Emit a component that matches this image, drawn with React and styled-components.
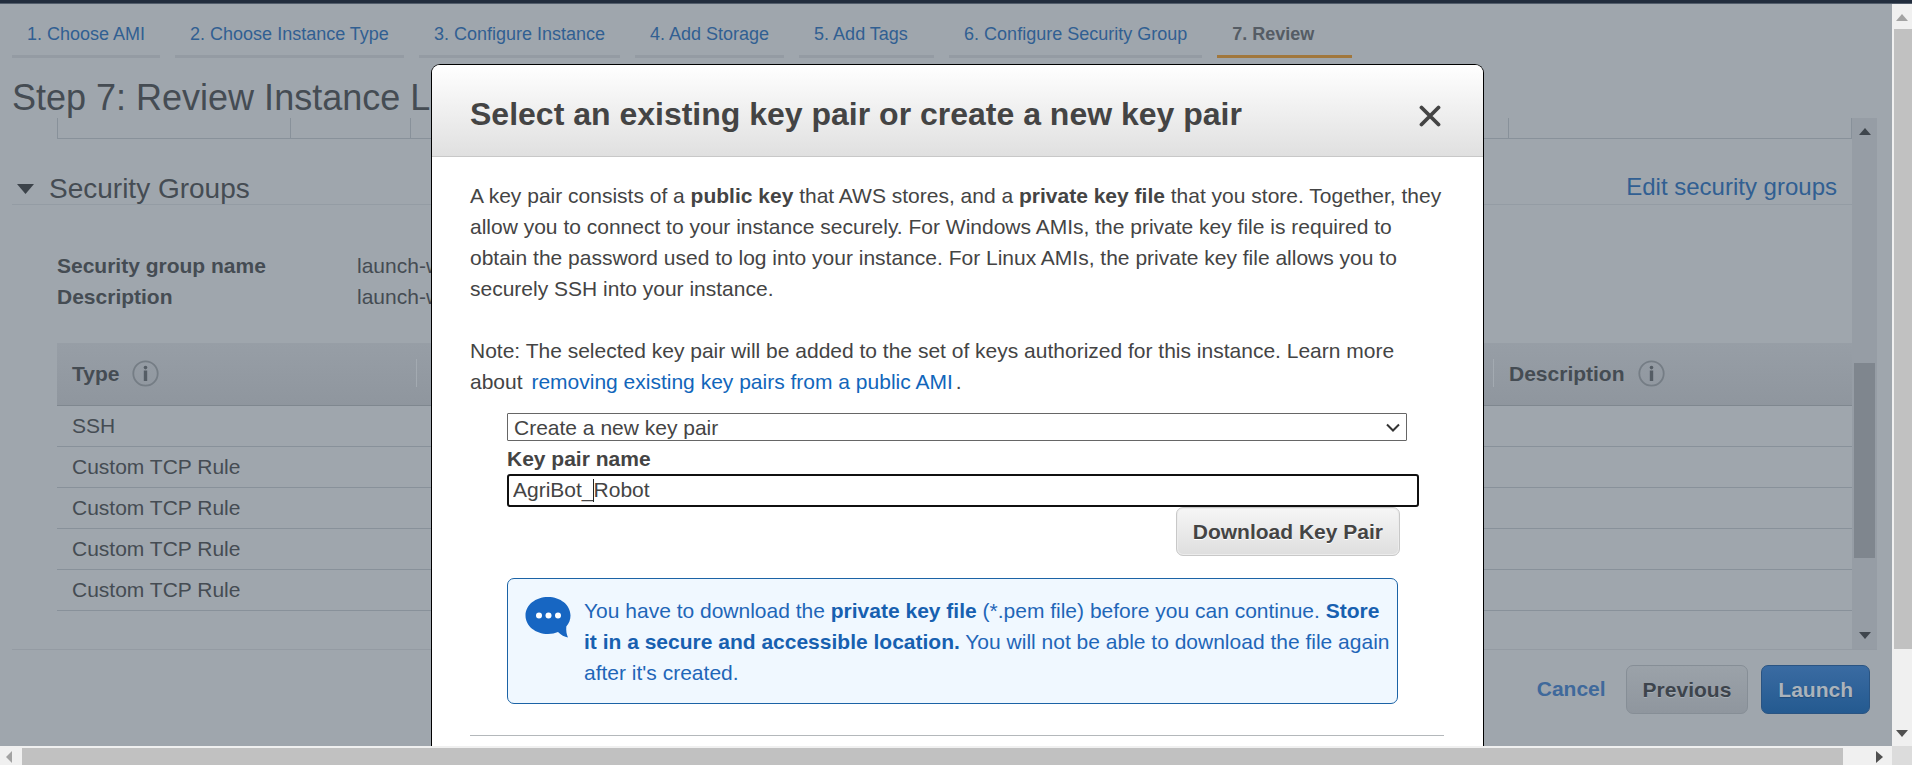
import React from 'react';
import styled, { createGlobalStyle, css } from 'styled-components';

const GlobalStyle = createGlobalStyle`
  *, *::before, *::after { box-sizing: border-box; }
  html, body { margin: 0; padding: 0; overflow: hidden; }
  body {
    font-family: "Liberation Sans", Arial, Helvetica, sans-serif;
    font-size: 21px;
    line-height: 31px;
    color: #444;
  }
  button, input, select { font-family: inherit; font-size: inherit; color: inherit; margin: 0; }
  h1, h2, p, dl, dd, dt { margin: 0; }
`;

const dim = {
  bg: '#9fa6ad',
  text: '#454c53',
  link: '#315f92',
  line: '#88919a',
};

const Screen = styled.div`
  height: 100vh;
  display: flex;
  flex-direction: column;
  overflow: hidden;
`;

const TopBar = styled.div`
  flex: none;
  height: 4px;
  background: #222d3d;
  border-bottom: 1px solid #525d6b;
`;

const Viewport = styled.div`
  flex: 1;
  min-height: 0;
  display: flex;
`;

const Workspace = styled.div`
  position: relative;
  flex: 1;
  min-width: 0;
  display: flex;
  flex-direction: column;
  overflow: hidden;
  background: ${dim.bg};
  color: ${dim.text};
`;

const StepNav = styled.nav`
  flex: none;
  display: flex;
  gap: 15px;
  padding: 0 12px;
`;

const StepLink = styled.a`
  min-width: 135px;
  padding: 16px 15px 7px;
  border-bottom: 3px solid ${(p) => (p.$active ? '#a1773c' : '#949ba3')};
  font-size: 18px;
  line-height: 28px;
  font-weight: ${(p) => (p.$active ? 700 : 400)};
  color: ${(p) => (p.$active ? '#555c64' : dim.link)};
  text-decoration: none;
  white-space: nowrap;
`;

const PageTitle = styled.h1`
  flex: none;
  padding: 19px 12px 0;
  font-size: 36px;
  line-height: 41px;
  font-weight: 400;
  white-space: nowrap;
`;

const ScrollPane = styled.div`
  flex: 1;
  min-height: 0;
  display: flex;
  margin: 0 15px 0 12px;
  border-bottom: 1px solid #949ba3;
`;

const PaneContent = styled.div`
  flex: 1;
  min-width: 0;
  overflow: hidden;
`;

const CutTable = styled.div`
  display: grid;
  grid-template-columns: 233px 120px 1fr 343px;
  height: 21px;
  margin-left: 45px;
  border: solid ${dim.line};
  border-width: 0 1px 1px 0;
`;

const CutCell = styled.div`
  border-left: 1px solid ${dim.line};
`;

const SectionHead = styled.header`
  display: flex;
  align-items: flex-start;
  margin-top: 34px;
  padding: 0 15px 0 5px;
  border-bottom: 1px solid #949ca4;
`;

const SectionToggle = styled.button`
  flex: 1;
  display: flex;
  align-items: center;
  gap: 15px;
  padding: 0;
  border: 0;
  background: none;
  font-size: 28px;
  line-height: 31px;
  text-align: left;
`;

const EditLink = styled.a`
  font-size: 24px;
  line-height: 28px;
  color: ${dim.link};
  text-decoration: none;
`;

const Details = styled.dl`
  display: grid;
  grid-template-columns: 300px 1fr;
  margin: 45px 0 31px 45px;
  dt { font-weight: 700; }
`;

const TableWrap = styled.div`
  padding-left: 45px;
`;

const RulesTable = styled.table`
  width: 100%;
  table-layout: fixed;
  border-collapse: separate;
  border-spacing: 0;
`;

const HeadCell = styled.th`
  width: ${(p) => p.$width || 'auto'};
  height: 63px;
  padding: 0 0 2px;
  background: linear-gradient(#979ea6, #8f969e);
  border-bottom: 1px solid #7f878f;
  text-align: left;
`;

const HeadLabel = styled.span`
  display: flex;
  align-items: center;
  gap: 13px;
  height: 28px;
  padding-left: 15px;
  border-left: ${(p) => (p.$divided ? '1px solid #a3aab1' : '0')};
  border-right: ${(p) => (p.$last ? '0' : '1px solid #a3aab1')};
`;

const BodyCell = styled.td`
  height: 41px;
  padding: 0 0 2px 15px;
  border-bottom: 1px solid ${dim.line};
  line-height: 31px;
`;

const Footer = styled.footer`
  flex: none;
  height: 96px;
  display: flex;
  justify-content: flex-end;
  align-items: flex-start;
  gap: 13px;
  padding: 15px 22px 0 0;
`;

const CancelLink = styled.a`
  margin-right: 7px;
  line-height: 48px;
  font-weight: 700;
  color: #3f699b;
  text-decoration: none;
`;

const tones = {
  light: css`
    border-color: #c8c8c8;
    background: linear-gradient(#f6f6f6, #dedede);
    box-shadow: inset 0 0 0 1px #ececec;
    color: #444;
    text-shadow: 0 1px 0 #fff;
  `,
  dimLight: css`
    border-color: #868e96;
    background: linear-gradient(#9ba2a9, #8f969e);
    color: #3d444c;
    text-shadow: 0 1px 0 #a6adb4;
  `,
  dimBlue: css`
    border-color: #2a5482;
    background: linear-gradient(#3a6ba2, #245a90);
    color: #abb3bb;
    text-shadow: 0 1px 1px #234b78;
  `,
};

const Button = styled.button`
  height: 49px;
  padding: 0 16px;
  border: 1px solid;
  border-radius: 7px;
  font-weight: 700;
  white-space: nowrap;
  ${(p) => tones[p.$tone]}
`;

const ModalLayer = styled.div`
  position: absolute;
  inset: 60px 0 0 0;
  display: flex;
  justify-content: center;
  padding-left: 23px;
`;

const Modal = styled.section`
  width: 1053px;
  max-width: 100%;
  background: #fff;
  border: 1px solid #000;
  border-bottom: 0;
  border-radius: 9px 9px 0 0;
  overflow: hidden;
  color: #444;
`;

const ModalHeader = styled.header`
  display: flex;
  align-items: center;
  justify-content: space-between;
  height: 92px;
  padding: 6px 42px 0 38px;
  background: linear-gradient(#fff, #e0e0e0);
  border-bottom: 1px solid #c8c8c8;
`;

const ModalTitle = styled.h2`
  font-size: 32px;
  line-height: 36px;
  font-weight: 700;
  white-space: nowrap;
`;

const CloseButton = styled.button`
  display: flex;
  padding: 12px 0 8px;
  border: 0;
  background: none;
`;

const ModalBody = styled.div`
  padding: 23px 39px 0 38px;
`;

const Paragraph = styled.p`
  & + & { margin-top: 31px; }
`;

const InlineLink = styled.a`
  margin: 0 3px;
  color: #1166bb;
  text-decoration: none;
`;

const Form = styled.form`
  margin: 16px 0 31px 37px;
`;

const SelectBox = styled.div`
  position: relative;
  margin-right: 37px;
  svg {
    position: absolute;
    right: 7px;
    top: 10px;
    pointer-events: none;
  }
`;

const Select = styled.select`
  display: block;
  width: 100%;
  height: 28px;
  padding: 0 6px;
  border: 1px solid #666;
  border-radius: 1px;
  background: #fff;
  appearance: none;
  outline: none;
`;

const FieldLabel = styled.label`
  display: block;
  margin-top: 2px;
  font-weight: 700;
`;

const InputBox = styled.div`
  position: relative;
  margin-right: 25px;
`;

const TextInput = styled.input`
  display: block;
  width: 100%;
  height: 33px;
  padding: 0 4px 2px;
  border: 2px solid #101010;
  border-radius: 3px;
  background: #fff;
  outline: none;
`;

const Caret = styled.span`
  position: absolute;
  left: 86px;
  top: 5px;
  width: 1px;
  height: 23px;
  background: #222;
`;

const Actions = styled.div`
  display: flex;
  justify-content: flex-end;
  margin-right: 44px;
`;

const Notice = styled.div`
  display: flex;
  align-items: flex-start;
  gap: 13px;
  margin: 22px 46px 0 0;
  padding: 16px 6px 15px 17px;
  border: 1px solid #1b63a6;
  border-radius: 7px;
  background: #f0f8ff;
  color: #1f66b8;
  svg { flex: none; margin-top: 1px; }
  b { color: #1760b0; }
`;

const Divider = styled.hr`
  margin: 0;
  border: 0;
  border-top: 1px solid #b4b8bb;
`;

const PaneScroll = styled.div`
  flex: none;
  width: 25px;
  display: flex;
  flex-direction: column;
  align-items: center;
  padding: 10px 0;
  background: #969da5;
`;

const PaneThumb = styled.div`
  width: 21px;
  flex: 196 0 0;
  background: #7f868e;
`;

const Spacer = styled.div`
  flex: ${(p) => p.$grow} 0 0;
`;

const VerticalBar = styled.div`
  flex: none;
  width: 20px;
  display: flex;
  flex-direction: column;
  align-items: center;
  padding: 10px 0 9px;
  background: #f0f0f0;
`;

const VerticalThumb = styled.div`
  align-self: stretch;
  flex: 620 0 0;
  margin: 8px 0 0 2px;
  background: #c1c1c1;
`;

const BottomRow = styled.div`
  flex: none;
  display: flex;
  height: 19px;
`;

const HorizontalBar = styled.div`
  flex: 1;
  display: flex;
  align-items: center;
  padding: 2px 9px 0 6px;
  background: #f0f0f0;
`;

const HorizontalThumb = styled.div`
  flex: 1;
  align-self: stretch;
  margin: 0 33px 0 10px;
  background: #c1c1c1;
`;

const BarCorner = styled.div`
  width: 20px;
  background: #dcdcdc;
`;

const arrows = {
  up: { w: 12, h: 7, d: 'M0 7L6 0L12 7Z' },
  down: { w: 12, h: 7, d: 'M0 0L6 7L12 0Z' },
  left: { w: 6, h: 12, d: 'M6 0L0 6L6 12Z' },
  right: { w: 7, h: 12, d: 'M0 0L7 6L0 12Z' },
};

function Arrow({ dir, color }) {
  const a = arrows[dir];
  return (
    <svg width={a.w} height={a.h} viewBox={`0 0 ${a.w} ${a.h}`} aria-hidden="true">
      <path d={a.d} fill={color} />
    </svg>
  );
}

function InfoIcon() {
  return (
    <svg width="27" height="27" viewBox="0 0 27 27" aria-hidden="true">
      <circle cx="13.5" cy="13.5" r="12.2" fill="none" stroke="#757d85" strokeWidth="1.8" />
      <circle cx="13.5" cy="7.6" r="1.8" fill="#555d65" />
      <path d="M13.5 10.500V21" stroke="#555d65" strokeWidth="3.400" />
    </svg>
  );
}

function ChatIcon() {
  return (
    <svg width="46" height="42" viewBox="0 0 46 42" aria-hidden="true">
      <path
        d="M23 1C10.500 1 .5 9 .5 19.500S10.500 38 23 38C27 38 30 37.300 33 36C36 39 39.500 41 43 41.500C41.500 38.500 41 34.500 41.300 30.500C44 27.500 45.500 23.500 45.500 19.500C45.500 9 35.500 1 23 1Z"
        fill="#1766c2"
      />
      <circle cx="14" cy="19.500" r="3" fill="#fff" />
      <circle cx="23.500" cy="19.500" r="3" fill="#fff" />
      <circle cx="33" cy="19.500" r="3" fill="#fff" />
    </svg>
  );
}

const steps = [
  '1. Choose AMI',
  '2. Choose Instance Type',
  '3. Configure Instance',
  '4. Add Storage',
  '5. Add Tags',
  '6. Configure Security Group',
  '7. Review',
];

const rules = ['SSH', 'Custom TCP Rule', 'Custom TCP Rule', 'Custom TCP Rule', 'Custom TCP Rule'];

function KeyPairDialog() {
  return (
    <ModalLayer>
      <Modal role="dialog" aria-labelledby="dialog-title">
        <ModalHeader>
          <ModalTitle id="dialog-title">Select an existing key pair or create a new key pair</ModalTitle>
          <CloseButton type="button" aria-label="Close">
            <svg width="22" height="22" viewBox="0 0 22 22">
              <path d="M2.500 2.500L19.500 19.500M19.500 2.500L2.500 19.500" stroke="#444" strokeWidth="3.800" strokeLinecap="round" />
            </svg>
          </CloseButton>
        </ModalHeader>
        <ModalBody>
          <Paragraph>
            A key pair consists of a <b>public key</b> that AWS stores, and a <b>private key file</b> that you
            store. Together, they allow you to connect to your instance securely. For Windows AMIs, the private
            key file is required to obtain the password used to log into your instance. For Linux AMIs, the
            private key file allows you to securely SSH into your instance.
          </Paragraph>
          <Paragraph>
            Note: The selected key pair will be added to the set of keys authorized for this instance. Learn
            more about <InlineLink href="#remove">removing existing key pairs from a public AMI</InlineLink>.
          </Paragraph>
          <Form onSubmit={(e) => e.preventDefault()}>
            <SelectBox>
              <Select aria-label="Key pair option" defaultValue="new">
                <option value="new">Create a new key pair</option>
              </Select>
              <svg width="14" height="10" viewBox="0 0 14 10" aria-hidden="true">
                <path d="M1 1.500L7 7.500L13 1.500" fill="none" stroke="#333" strokeWidth="2" />
              </svg>
            </SelectBox>
            <FieldLabel htmlFor="key-name">Key pair name</FieldLabel>
            <InputBox>
              <TextInput id="key-name" type="text" defaultValue="AgriBot_Robot" />
              <Caret />
            </InputBox>
            <Actions>
              <Button type="button" $tone="light">Download Key Pair</Button>
            </Actions>
            <Notice>
              <ChatIcon />
              <p>
                You have to download the <b>private key file</b> (*.pem file) before you can continue.{' '}
                <b>Store it in a secure and accessible location.</b> You will not be able to download the file
                again after it's created.
              </p>
            </Notice>
          </Form>
          <Divider />
        </ModalBody>
      </Modal>
    </ModalLayer>
  );
}

export default function App() {
  return (
    <Screen>
      <GlobalStyle />
      <TopBar />
      <Viewport>
        <Workspace>
          <StepNav>
            {steps.map((s, i) => (
              <StepLink key={s} href={`#step-${i + 1}`} $active={i === 6}>{s}</StepLink>
            ))}
          </StepNav>
          <PageTitle>Step 7: Review Instance Launch</PageTitle>
          <ScrollPane>
            <PaneContent>
              <CutTable><CutCell /><CutCell /><CutCell /><CutCell /></CutTable>
              <SectionHead>
                <SectionToggle type="button">
                  <svg width="17" height="10" viewBox="0 0 17 10" aria-hidden="true">
                    <path d="M0 0H17L8.500 10Z" fill="#3c434a" />
                  </svg>
                  Security Groups
                </SectionToggle>
                <EditLink href="#edit">Edit security groups</EditLink>
              </SectionHead>
              <Details>
                <dt>Security group name</dt>
                <dd>launch-wizard-7</dd>
                <dt>Description</dt>
                <dd>launch-wizard-7</dd>
              </Details>
              <TableWrap>
                <RulesTable>
                  <thead>
                    <tr>
                      <HeadCell $width="360px"><HeadLabel>Type <InfoIcon /></HeadLabel></HeadCell>
                      <HeadCell />
                      <HeadCell $width="359px"><HeadLabel $divided $last>Description <InfoIcon /></HeadLabel></HeadCell>
                    </tr>
                  </thead>
                  <tbody>
                    {rules.map((r, i) => (
                      <tr key={i}><BodyCell>{r}</BodyCell><BodyCell /><BodyCell /></tr>
                    ))}
                  </tbody>
                </RulesTable>
              </TableWrap>
            </PaneContent>
            <PaneScroll>
              <Arrow dir="up" color="#3f464d" />
              <Spacer $grow={228} />
              <PaneThumb />
              <Spacer $grow={74} />
              <Arrow dir="down" color="#3f464d" />
            </PaneScroll>
          </ScrollPane>
          <Footer>
            <CancelLink href="#cancel">Cancel</CancelLink>
            <Button type="button" $tone="dimLight">Previous</Button>
            <Button type="button" $tone="dimBlue">Launch</Button>
          </Footer>
          <KeyPairDialog />
        </Workspace>
        <VerticalBar>
          <Arrow dir="up" color="#a3a3a3" />
          <VerticalThumb />
          <Spacer $grow={81} />
          <Arrow dir="down" color="#505050" />
        </VerticalBar>
      </Viewport>
      <BottomRow>
        <HorizontalBar>
          <Arrow dir="left" color="#a3a3a3" />
          <HorizontalThumb />
          <Arrow dir="right" color="#505050" />
        </HorizontalBar>
        <BarCorner />
      </BottomRow>
    </Screen>
  );
}
